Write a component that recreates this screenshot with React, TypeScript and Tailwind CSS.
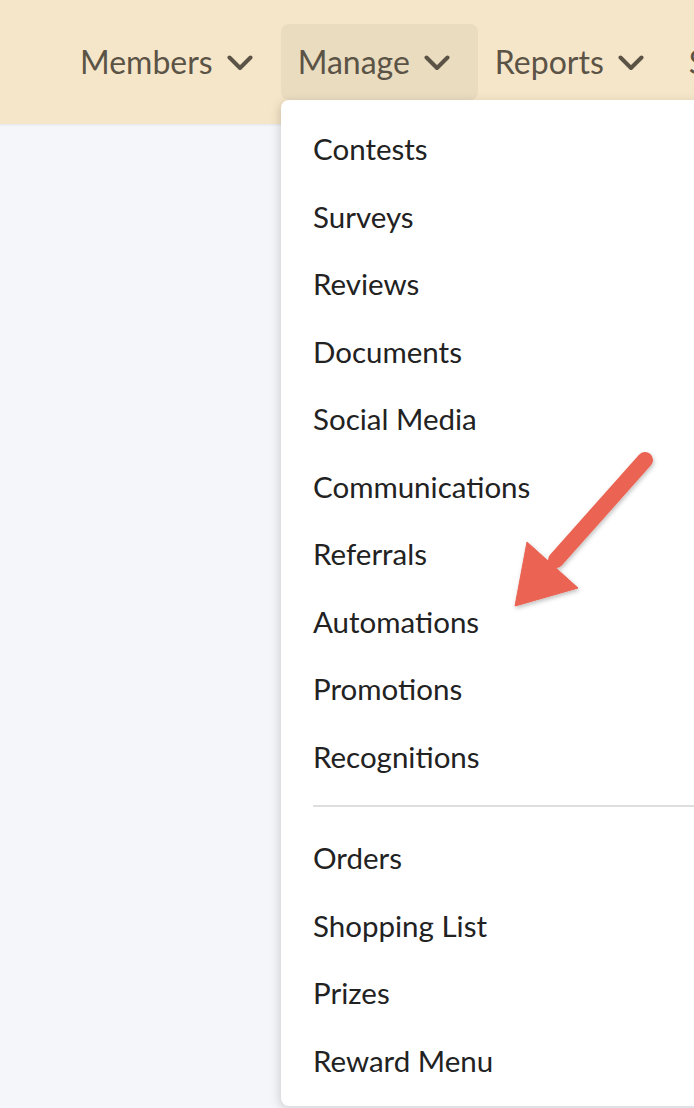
import React from "react";

const Chevron = () => (
  <svg width="26" height="16" viewBox="0 0 26 16" className="ml-[14px] mt-[2px] shrink-0" fill="none">
    <path d="M2.5 2.5 L13 13 L23.5 2.5" stroke="#5b5346" strokeWidth="4" strokeLinecap="round" strokeLinejoin="round" />
  </svg>
);

const NavItem = ({ label, active }: { label: string; active?: boolean }) => (
  <div
    className={
      "flex items-center shrink-0 h-[76px] pl-[17px] pr-[28px] rounded-[8px] " +
      (active ? "bg-[#e9dcbf]" : "")
    }
  >
    <span className="text-[32px] text-[#5b5346] leading-none whitespace-nowrap">{label}</span>
    <Chevron />
  </div>
);

const group1 = [
  "Contests",
  "Surveys",
  "Reviews",
  "Documents",
  "Social Media",
  "Communications",
  "Referrals",
  "Automations",
  "Promotions",
  "Recognitions",
];
const group2 = ["Orders", "Shopping List", "Prizes", "Reward Menu"];

const MenuItem = ({ label }: { label: string }) => (
  <div className="h-[67.5px] flex items-center pl-[32px] text-[29.5px] text-[#222222] leading-none whitespace-nowrap">
    {label}
  </div>
);

export default function App() {
  return (
    <div
      className="relative w-[694px] h-[1108px] overflow-hidden bg-[#f5f6fa]"
      style={{ fontFamily: "Lato, 'Noto Sans', sans-serif" }}
    >
      <div className="h-[124px] bg-[#f6e6c9] flex items-start pt-[24px] pl-[63px] overflow-hidden shadow-[0_1px_2px_rgba(0,0,0,0.08)]">
        <NavItem label="Members" />
        <NavItem label="Manage" active />
        <NavItem label="Reports" />
        <NavItem label="Settings" />
      </div>

      <div className="absolute left-[281px] top-[100px] right-[-20px] bottom-[2px] bg-white rounded-[8px] shadow-[-2px_2px_10px_rgba(0,0,0,0.15)] pt-[15px]">
        {group1.map((l) => (
          <MenuItem key={l} label={l} />
        ))}
        <div className="ml-[32px] mt-[15px] mb-[17px] h-[2px] bg-[#dedede]" />
        {group2.map((l) => (
          <MenuItem key={l} label={l} />
        ))}
      </div>

      <svg className="absolute left-0 top-0 pointer-events-none" width="694" height="1108" viewBox="0 0 694 1108">
        <defs>
          <filter id="sh" x="-20%" y="-20%" width="140%" height="140%">
            <feDropShadow dx="1" dy="2" stdDeviation="2" floodColor="#000" floodOpacity="0.25" />
          </filter>
        </defs>
        <g filter="url(#sh)" fill="#ea6352" stroke="#ea6352">
          <line x1="645" y1="460" x2="556" y2="560" strokeWidth="16" strokeLinecap="round" />
          <polygon points="515,606 527,542 578,588" strokeWidth="1" strokeLinejoin="round" />
        </g>
      </svg>
    </div>
  );
}
